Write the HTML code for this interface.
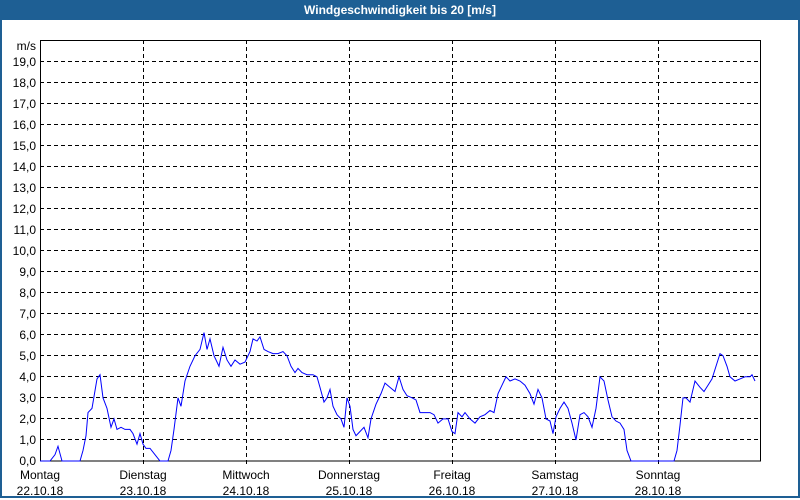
<!DOCTYPE html>
<html><head><meta charset="utf-8"><style>
html,body{margin:0;padding:0;width:800px;height:500px;overflow:hidden;background:#fff;font-family:"Liberation Sans",sans-serif;}
#wrap{position:absolute;left:0;top:0;width:796px;height:496px;border:2px solid #1e5f94;border-top:none;}
#title{position:absolute;left:0;top:0;width:800px;height:20px;background:#1e5f94;color:#fff;font-weight:bold;font-size:12px;text-align:center;line-height:20px;}
.yl{position:absolute;right:764px;font-size:12px;color:#000;line-height:12px;}
.dl{position:absolute;width:100px;text-align:center;font-size:12px;color:#000;}
</style></head><body>
<div id="wrap"></div>
<div id="title">Windgeschwindigkeit bis 20 [m/s]</div>
<svg width="800" height="500" style="position:absolute;left:0;top:0">
<g stroke="#000" stroke-width="1" stroke-dasharray="4,3" shape-rendering="crispEdges">
<line x1="40" x2="760" y1="61.5" y2="61.5"/><line x1="40" x2="760" y1="82.5" y2="82.5"/><line x1="40" x2="760" y1="103.5" y2="103.5"/><line x1="40" x2="760" y1="124.5" y2="124.5"/><line x1="40" x2="760" y1="145.5" y2="145.5"/><line x1="40" x2="760" y1="166.5" y2="166.5"/><line x1="40" x2="760" y1="187.5" y2="187.5"/><line x1="40" x2="760" y1="208.5" y2="208.5"/><line x1="40" x2="760" y1="229.5" y2="229.5"/><line x1="40" x2="760" y1="250.5" y2="250.5"/><line x1="40" x2="760" y1="271.5" y2="271.5"/><line x1="40" x2="760" y1="292.5" y2="292.5"/><line x1="40" x2="760" y1="313.5" y2="313.5"/><line x1="40" x2="760" y1="334.5" y2="334.5"/><line x1="40" x2="760" y1="355.5" y2="355.5"/><line x1="40" x2="760" y1="376.5" y2="376.5"/><line x1="40" x2="760" y1="397.5" y2="397.5"/><line x1="40" x2="760" y1="418.5" y2="418.5"/><line x1="40" x2="760" y1="439.5" y2="439.5"/>
<line x1="143.5" x2="143.5" y1="40" y2="466"/><line x1="246.5" x2="246.5" y1="40" y2="466"/><line x1="349.5" x2="349.5" y1="40" y2="466"/><line x1="452.5" x2="452.5" y1="40" y2="466"/><line x1="555.5" x2="555.5" y1="40" y2="466"/><line x1="658.5" x2="658.5" y1="40" y2="466"/>
</g>
<rect x="40.5" y="40.5" width="720" height="420.5" fill="none" stroke="#000" shape-rendering="crispEdges"/>
<g transform="translate(0,461) scale(1,-21.05)">
<polyline fill="none" stroke="#0000ff" stroke-width="1" vector-effect="non-scaling-stroke" points="40,0 50,0 55,0.3 58,0.7 62,0 80,0 83,0.5 86,1.2 88,2.3 92,2.5 97,3.9 100,4.1 103,3.0 107,2.5 111,1.6 114,2.0 117,1.5 121,1.6 125,1.5 130,1.5 133,1.3 137,0.8 140,1.3 143,0.8 146,0.6 150,0.6 155,0.3 160,0 168,0 171,0.5 174,1.5 178,3.0 181,2.6 185,3.8 190,4.5 195,5.0 200,5.3 204,6.1 207,5.3 210,5.8 214,5.0 219,4.5 223,5.4 227,4.8 231,4.5 235,4.8 240,4.6 245,4.7 250,5.2 253,5.8 257,5.7 260,5.9 264,5.3 268,5.2 273,5.1 278,5.1 283,5.2 287,5.0 291,4.5 295,4.2 298,4.4 302,4.2 307,4.1 313,4.1 317,4.0 320,3.5 324,2.8 327,3.0 330,3.4 333,2.6 337,2.2 341,2.0 344,1.6 347,3.0 350,2.6 353,1.5 356,1.2 360,1.4 364,1.6 368,1.1 371,2.0 376,2.7 381,3.2 385,3.7 390,3.5 395,3.3 399,4.0 403,3.4 407,3.1 412,3.0 416,2.9 420,2.3 425,2.3 430,2.3 434,2.2 438,1.8 443,2.0 448,2.0 452,1.4 455,1.3 458,2.3 462,2.1 465,2.3 470,2.0 475,1.8 480,2.1 485,2.2 490,2.4 494,2.3 498,3.2 502,3.6 506,4.0 510,3.8 515,3.9 520,3.8 525,3.6 530,3.2 534,2.7 538,3.4 542,3.0 546,2.0 550,1.9 553,1.3 556,2.1 560,2.5 564,2.8 568,2.5 572,1.8 576,1.0 580,2.2 584,2.3 588,2.1 592,1.6 596,2.5 600,4.0 604,3.8 608,2.9 612,2.1 616,1.9 620,1.8 624,1.5 627,0.5 631,0 674,0 677,0.5 680,1.7 683,3.0 686,3.0 690,2.8 695,3.8 700,3.5 704,3.3 708,3.6 712,3.9 716,4.5 720,5.1 723,5.0 727,4.5 730,4.0 735,3.8 740,3.9 745,4.0 750,4.0 752,4.1 755,3.8"/>
</g>
</svg>
<div class="yl" style="top:40px">m/s</div>
<div class="yl" style="top:56px">19,0</div><div class="yl" style="top:77px">18,0</div><div class="yl" style="top:98px">17,0</div><div class="yl" style="top:119px">16,0</div><div class="yl" style="top:140px">15,0</div><div class="yl" style="top:161px">14,0</div><div class="yl" style="top:182px">13,0</div><div class="yl" style="top:203px">12,0</div><div class="yl" style="top:224px">11,0</div><div class="yl" style="top:245px">10,0</div><div class="yl" style="top:266px">9,0</div><div class="yl" style="top:287px">8,0</div><div class="yl" style="top:308px">7,0</div><div class="yl" style="top:329px">6,0</div><div class="yl" style="top:350px">5,0</div><div class="yl" style="top:371px">4,0</div><div class="yl" style="top:392px">3,0</div><div class="yl" style="top:413px">2,0</div><div class="yl" style="top:434px">1,0</div><div class="yl" style="top:455px">0,0</div>
<div class="dl" style="left:-10px;top:468px">Montag</div><div class="dl" style="left:-10px;top:484px">22.10.18</div>
<div class="dl" style="left:93px;top:468px">Dienstag</div><div class="dl" style="left:93px;top:484px">23.10.18</div>
<div class="dl" style="left:196px;top:468px">Mittwoch</div><div class="dl" style="left:196px;top:484px">24.10.18</div>
<div class="dl" style="left:299px;top:468px">Donnerstag</div><div class="dl" style="left:299px;top:484px">25.10.18</div>
<div class="dl" style="left:402px;top:468px">Freitag</div><div class="dl" style="left:402px;top:484px">26.10.18</div>
<div class="dl" style="left:505px;top:468px">Samstag</div><div class="dl" style="left:505px;top:484px">27.10.18</div>
<div class="dl" style="left:608px;top:468px">Sonntag</div><div class="dl" style="left:608px;top:484px">28.10.18</div>
</body></html>
